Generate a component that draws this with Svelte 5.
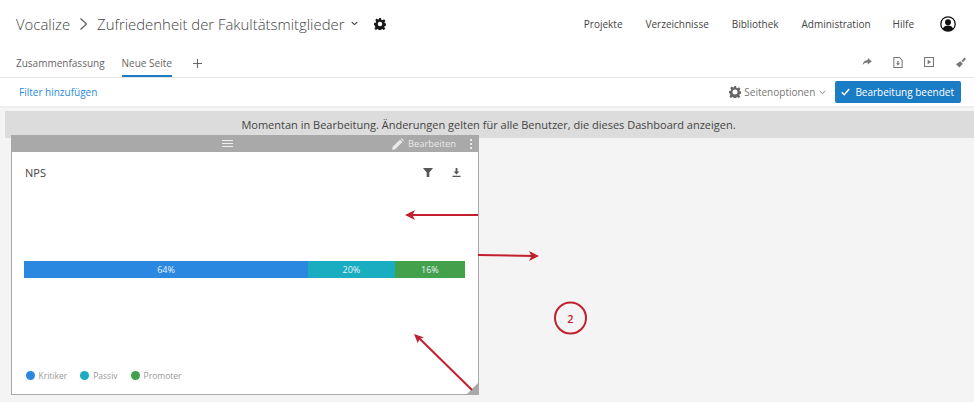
<script lang="ts">
  const navLinks = ["Projekte", "Verzeichnisse", "Bibliothek", "Administration", "Hilfe"];
  const segments = [
    { label: "64%", width: 64.4, color: "#2a88e0" },
    { label: "20%", width: 19.7, color: "#1aacc0" },
    { label: "16%", width: 15.9, color: "#43a04b" },
  ];
  const legend = [
    { label: "Kritiker", color: "#2a88e0" },
    { label: "Passiv", color: "#1aacc0" },
    { label: "Promoter", color: "#43a04b" },
  ];
</script>

<div class="page">
  <header class="header">
    <div class="top-row">
      <div class="crumbs">
        <span class="crumb">Vocalize</span>
        <svg class="crumb-sep" width="9" height="14" viewBox="0 0 9 14"><path d="M1.5 1.5 7.5 7l-6 5.500" fill="none" stroke="#555" stroke-width="1.100" /></svg>
        <span class="crumb">Zufriedenheit der Fakultätsmitglieder</span>
        <svg class="caret" width="7" height="5" viewBox="0 0 7 5"><path d="M.7 1l2.800 2.600L6.300 1" fill="none" stroke="#444" stroke-width="1.100" /></svg>
        <svg class="gear" width="12" height="12" viewBox="0 0 24 24"><path fill="#1a1a1a" fill-rule="evenodd" d="M10 0h4l.7 3.400 2.300 1 3-1.900 2.800 2.800-1.900 3 1 2.300 3.100.7v4l-3.400.7-1 2.300 1.900 3-2.800 2.800-3-1.900-2.300 1-.7 3.100h-4l-.7-3.400-2.300-1-3 1.900-2.800-2.800 1.900-3-1-2.300L0 14v-4l3.400-.7 1-2.300-1.900-3 2.800-2.800 3 1.900 2.300-1zM12 7.500a4.500 4.500 0 1 0 0 9 4.500 4.500 0 0 0 0-9z" /></svg>
      </div>
      <nav class="nav">
        {#each navLinks as link}
          <span>{link}</span>
        {/each}
        <svg class="avatar" width="16" height="16" viewBox="0 0 16 16">
          <circle cx="8" cy="8" r="7.200" fill="#fff" stroke="#111" stroke-width="1.300" />
          <circle cx="8" cy="6.300" r="3" fill="#111" />
          <path d="M2.800 13c.8-2.600 2.800-3.500 5.200-3.500s4.400.9 5.200 3.500c-1.400 1.400-3.200 2.100-5.200 2.100s-3.800-.7-5.200-2.100z" fill="#111" />
        </svg>
      </nav>
    </div>
    <div class="tab-row">
      <div class="tabs">
        <span class="tab">Zusammenfassung</span>
        <span class="tab active">Neue Seite</span>
        <svg class="plus" width="9" height="9" viewBox="0 0 9 9"><path d="M4.500 0v9M0 4.500h9" stroke="#666" stroke-width="1.100" /></svg>
      </div>
      <div class="tools">
        <svg width="10" height="8" viewBox="0 0 12 10"><path fill="#777" d="M7 0l5 4-5 4V5.600C4 5.600 2 6.400.4 9 .8 5.200 3 2.700 7 2.400z" /></svg>
        <svg class="tool-doc" width="10" height="11" viewBox="0 0 11 13"><path fill="none" stroke="#777" stroke-width="1.200" d="M.6.600h6.600l3.200 3.200v8.600H.6z" /><path fill="#777" d="M4.700 4.800h1.600v2.600h1.500L5.500 10 3.200 7.400h1.500z" /></svg>
        <svg class="tool-play" width="10" height="10" viewBox="0 0 11 11"><path fill="none" stroke="#777" stroke-width="1.200" d="M.6.600h9.800v9.800H.6z" /><path fill="#777" d="M4 3l4 2.500L4 8z" /></svg>
        <svg class="tool-brush" width="10" height="11" viewBox="0 0 12 12"><path fill="#777" d="M10.300 0 12 1.700 8.300 5.700 6.600 4.100zM5.200 4.600l3 3L4.100 12 0 8z" /></svg>
      </div>
    </div>
    <div class="filter-row">
      <span class="filter-link">Filter hinzufügen</span>
      <div class="page-actions">
        <svg width="12" height="12" viewBox="0 0 24 24"><path fill="#666" fill-rule="evenodd" d="M10 0h4l.7 3.400 2.300 1 3-1.900 2.800 2.800-1.900 3 1 2.300 3.100.7v4l-3.400.7-1 2.300 1.900 3-2.800 2.800-3-1.900-2.300 1-.7 3.100h-4l-.7-3.400-2.300-1-3 1.900-2.800-2.800 1.900-3-1-2.300L0 14v-4l3.400-.7 1-2.300-1.900-3 2.800-2.800 3 1.900 2.300-1zM12 7a5 5 0 1 0 0 10 5 5 0 0 0 0-10z" /></svg>
        <span class="page-options">Seitenoptionen</span>
        <svg width="7" height="5" viewBox="0 0 7 5"><path d="M.7 1l2.800 2.600L6.300 1" fill="none" stroke="#888" stroke-width="1" /></svg>
        <button class="done">
          <svg width="9" height="8" viewBox="0 0 9 8"><path d="M.8 4.200l2.500 2.500L8.200 1" fill="none" stroke="#fff" stroke-width="1.500" /></svg>
          Bearbeitung beendet
        </button>
      </div>
    </div>
  </header>

  <main class="canvas">
    <div class="banner">Momentan in Bearbeitung. Änderungen gelten für alle Benutzer, die dieses Dashboard anzeigen.</div>
    <section class="widget">
      <div class="widget-bar">
        <span class="handle"><i></i><i></i><i></i></span>
        <span class="edit">
          <svg width="12" height="12" viewBox="0 0 12 12"><path fill="#e8e8e8" d="M0 12l.7-3.200L8 1.500 10.500 4l-7.300 7.300zM8.800.7l.7-.7L12 2.500l-.7.700z" /></svg>
          Bearbeiten
        </span>
        <span class="dots"><i></i><i></i><i></i></span>
      </div>
      <div class="widget-body">
        <div class="widget-head">
          <span class="widget-title">NPS</span>
          <div class="widget-tools">
            <svg width="10" height="9" viewBox="0 0 10 9"><path fill="#555" d="M0 0h10L6.300 4.500V9H3.700V4.500z" /></svg>
            <svg width="9" height="9" viewBox="0 0 9 9"><path fill="#555" d="M3.600 0h1.800v3.500h2L4.500 6.500l-2.900-3h2zM.5 7.800h8v1.100h-8z" /></svg>
          </div>
        </div>
        <div class="bar">
          {#each segments as s}
            <div class="segment" style:width="{s.width}%" style:background={s.color}>{s.label}</div>
          {/each}
        </div>
        <div class="legend">
          {#each legend as item}
            <span class="legend-item"><i style:background={item.color}></i>{item.label}</span>
          {/each}
        </div>
      </div>
      <span class="resize"></span>
    </section>
  </main>

  <!-- annotation layer on top of the screenshot -->
  <svg class="annotations" width="974" height="402" viewBox="0 0 974 402">
    <g stroke="#c2202f" stroke-width="2" fill="none">
      <path d="M478 215H410" />
      <path d="M478 255l56 1" />
      <path d="M472 390 419 338" />
      <circle cx="570.500" cy="318" r="15.500" />
    </g>
    <g fill="#c2202f">
      <path d="M405 215l10-5-2.500 5 2.500 5z" />
      <path d="M539 256l-10-5 2.500 5-2.500 5z" />
      <path d="M414 334l10 3.500-4.500 1.300-1.700 4.500z" />
    </g>
    <text x="570.500" y="322.500" class="step">2</text>
  </svg>
</div>

<style>
  :global(body) {
    margin: 0;
    background: #f4f4f4;
  }

  .page {
    position: relative;
    width: 974px;
    height: 402px;
    overflow: hidden;
    font-family: "Open Sans", "Liberation Sans", sans-serif;
    color: #444;
  }

  .header {
    background: #fff;
  }

  .top-row {
    display: flex;
    justify-content: space-between;
    align-items: center;
    height: 47px;
    padding: 0 18px 0 16px;
  }

  .crumbs {
    display: flex;
    align-items: center;
  }

  .crumb {
    font-size: 14.900px;
    font-weight: 300;
    color: #444;
  }

  .crumb-sep {
    margin: 0 9px;
  }

  .caret {
    margin-left: 7px;
  }

  .gear {
    margin-left: 16px;
  }

  .nav {
    display: flex;
    align-items: center;
    gap: 23px;
    font-size: 10px;
    color: #444;
  }

  .nav span:last-of-type {
    margin-right: 1px;
    margin-left: -1px;
  }

  .avatar {
    margin-left: 2px;
  }

  .tab-row {
    display: flex;
    justify-content: space-between;
    align-items: center;
    height: 30px;
    padding: 0 8px 0 16px;
    border-bottom: 1px solid #e6e6e6;
  }

  .tabs {
    display: flex;
    align-items: center;
    gap: 17px;
    height: 100%;
  }

  .tab {
    display: flex;
    align-items: center;
    height: 100%;
    box-sizing: border-box;
    font-size: 10px;
    color: #666;
    padding-top: 3px;
    border-bottom: 2px solid transparent;
  }

  .tab.active {
    border-bottom-color: #1a7cc5;
  }

  .plus {
    margin-left: 4px;
    margin-top: 2px;
  }

  .tools {
    display: flex;
    align-items: center;
    gap: 20px;
  }

  .tool-doc,
  .tool-play {
    margin-left: 1px;
  }

  .tool-play {
    margin-left: 1px;
  }

  .tool-brush {
    margin-left: 2px;
  }

  .filter-row {
    display: flex;
    justify-content: space-between;
    align-items: center;
    height: 28px;
    padding: 0 13px 0 19px;
    box-shadow: 0 2px 0 #eee;
  }

  .filter-link {
    font-size: 10px;
    color: #2a8ce0;
  }

  .page-actions {
    display: flex;
    align-items: center;
    gap: 3px;
  }

  .page-options {
    font-size: 10px;
    color: #777;
    margin-right: 1px;
  }

  .done {
    display: flex;
    align-items: center;
    gap: 5px;
    height: 22px;
    margin-left: 6px;
    padding: 0 7px 0 6px;
    border: none;
    border-radius: 2px;
    background: #1a7cc5;
    color: #fff;
    font: 10px "Open Sans", "Liberation Sans", sans-serif;
  }

  .canvas {
    padding: 5px 0 0 5px;
  }

  .banner {
    height: 27px;
    line-height: 28px;
    padding-right: 2px;
    background: #dcdcdc;
    text-align: center;
    font-size: 11px;
    color: #444;
  }

  .widget {
    position: relative;
    width: 468px;
    height: 260px;
    margin: -3px 0 0 6px;
    box-sizing: border-box;
    border: 1px solid #a9a9a9;
    border-top: none;
    background: #fff;
  }

  .widget-bar {
    position: relative;
    display: flex;
    justify-content: flex-end;
    align-items: center;
    height: 17px;
    background: #a9a9a9;
    color: #e8e8e8;
    font-size: 9.400px;
  }

  .handle {
    position: absolute;
    left: 210px;
    top: 5px;
    display: flex;
    flex-direction: column;
    gap: 2px;
  }

  .handle i {
    display: block;
    width: 11px;
    height: 1px;
    background: #eee;
  }

  .edit {
    display: flex;
    align-items: center;
    gap: 4px;
    margin-right: 14px;
  }

  .dots {
    display: flex;
    flex-direction: column;
    gap: 2px;
    margin-right: 6px;
  }

  .dots i {
    display: block;
    width: 2px;
    height: 2px;
    background: #e8e8e8;
  }

  .widget-body {
    padding: 0 13px 0 12px;
  }

  .widget-head {
    display: flex;
    justify-content: space-between;
    align-items: center;
    height: 41px;
  }

  .widget-title {
    font-size: 11px;
    color: #444;
    margin-left: 1px;
  }

  .widget-tools {
    display: flex;
    align-items: center;
    gap: 19px;
    margin-right: 4px;
    margin-top: -1px;
  }

  .bar {
    display: flex;
    height: 17px;
    margin-top: 68px;
  }

  .segment {
    display: flex;
    align-items: center;
    justify-content: center;
    color: #e6f2fa;
    font-size: 9px;
  }

  .legend {
    display: flex;
    gap: 13px;
    margin: 92px 0 0 1.500px;
  }

  .legend-item {
    display: flex;
    align-items: center;
    gap: 4px;
    font-size: 8.500px;
    color: #999;
  }

  .legend-item i {
    display: block;
    width: 9px;
    height: 9px;
    border-radius: 50%;
  }

  .resize {
    position: absolute;
    right: 0;
    bottom: 0;
    width: 0;
    height: 0;
    border-left: 11px solid transparent;
    border-bottom: 11px solid #a9a9a9;
  }

  .annotations {
    position: absolute;
    top: 0;
    left: 0;
  }

  .step {
    font-family: "Open Sans", "Liberation Sans", sans-serif;
    font-size: 11px;
    font-weight: 600;
    fill: #c2202f;
    text-anchor: middle;
  }
</style>
